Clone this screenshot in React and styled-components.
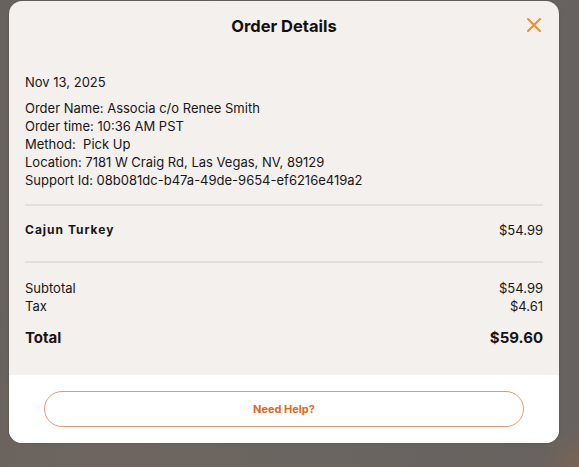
import React from "react";
import styled, { createGlobalStyle } from "styled-components";

const GlobalStyle = createGlobalStyle`
  html, body {
    margin: 0;
    padding: 0;
  }
  body {
    font-family: Inter, "Liberation Sans", sans-serif;
    color: #161616;
    background:
      radial-gradient(circle at 100% 100%, #7a6455 0, transparent 40px),
      radial-gradient(ellipse at 20% 100%, #6e655f 0, transparent 200px),
      linear-gradient(90deg, #67625e 0%, #6a6561 50%, #67625f 100%);
    width: 579px;
    height: 467px;
    overflow: hidden;
  }
`;

const Backdrop = styled.div`
  width: 579px;
  height: 467px;
  padding: 1px 0 0 9px;
  box-sizing: border-box;
`;

const Modal = styled.div`
  width: 550px;
  height: 442px;
  border-radius: 13px;
  background: #f4f0ed;
  overflow: hidden;
  display: flex;
  flex-direction: column;
  box-shadow: 0 0 2px rgba(0, 0, 0, 0.25);
`;

const Header = styled.div`
  position: relative;
  height: 50px;
  display: flex;
  align-items: center;
  justify-content: center;
`;

const Title = styled.h2`
  margin: 0;
  font-size: 16.5px;
  font-weight: 700;
  letter-spacing: 0;
  color: #111;
`;

const CloseButton = styled.button`
  position: absolute;
  right: 15px;
  top: 14px;
  width: 20px;
  height: 20px;
  padding: 0;
  border: none;
  background: transparent;
  cursor: pointer;
  display: flex;
  align-items: center;
  justify-content: center;
`;

const Body = styled.div`
  flex: 1;
  padding: 22px 16px 0 16px;
  font-size: 13px;
  line-height: 18px;
`;

const DateLine = styled.div`
  margin-bottom: 8px;
`;

const Info = styled.div`
  padding-bottom: 15px;
  border-bottom: 2px solid #e3dfdb;
`;

const ItemRow = styled.div`
  display: flex;
  justify-content: space-between;
  align-items: flex-start;
  padding: 15px 0 22px;
  border-bottom: 2px solid #e3dfdb;
`;

const ItemName = styled.span`
  font-weight: 700;
  font-size: 12px;
  letter-spacing: 1px;
`;

const Totals = styled.div`
  padding-top: 16px;
`;

const Row = styled.div`
  display: flex;
  justify-content: space-between;
  font-size: ${(p) => (p.$big ? "15px" : "13px")};
  font-weight: ${(p) => (p.$big ? 700 : 400)};
  line-height: ${(p) => (p.$big ? "22px" : "18px")};
  margin-top: ${(p) => (p.$big ? "12px" : "0")};
`;

const Footer = styled.div`
  height: 68px;
  background: #ffffff;
  display: flex;
  align-items: center;
  justify-content: center;
`;

const HelpButton = styled.button`
  width: 480px;
  height: 36px;
  border-radius: 18px;
  border: 1px solid #e09a73;
  background: #fff;
  color: #e0671c;
  font-family: Inter, "Liberation Sans", sans-serif;
  font-weight: 700;
  font-size: 11px;
  cursor: pointer;
`;

export default function App() {
  return (
    <>
      <GlobalStyle />
      <Backdrop>
        <Modal>
          <Header>
            <Title>Order Details</Title>
            <CloseButton aria-label="Close">
              <svg width="16" height="16" viewBox="0 0 16 16">
                <path
                  d="M2 2 L14 14 M14 2 L2 14"
                  stroke="#ef8f2f"
                  strokeWidth="2"
                  strokeLinecap="round"
                />
              </svg>
            </CloseButton>
          </Header>
          <Body>
            <DateLine>Nov 13, 2025</DateLine>
            <Info>
              <div>Order Name: Associa c/o Renee Smith</div>
              <div>Order time: 10:36 AM PST</div>
              <div>Method:&nbsp; Pick Up</div>
              <div>Location: 7181 W Craig Rd, Las Vegas, NV, 89129</div>
              <div>Support Id: 08b081dc-b47a-49de-9654-ef6216e419a2</div>
            </Info>
            <ItemRow>
              <ItemName>Cajun Turkey</ItemName>
              <span>$54.99</span>
            </ItemRow>
            <Totals>
              <Row>
                <span>Subtotal</span>
                <span>$54.99</span>
              </Row>
              <Row>
                <span>Tax</span>
                <span>$4.61</span>
              </Row>
              <Row $big>
                <span>Total</span>
                <span>$59.60</span>
              </Row>
            </Totals>
          </Body>
          <Footer>
            <HelpButton>Need Help?</HelpButton>
          </Footer>
        </Modal>
      </Backdrop>
    </>
  );
}
